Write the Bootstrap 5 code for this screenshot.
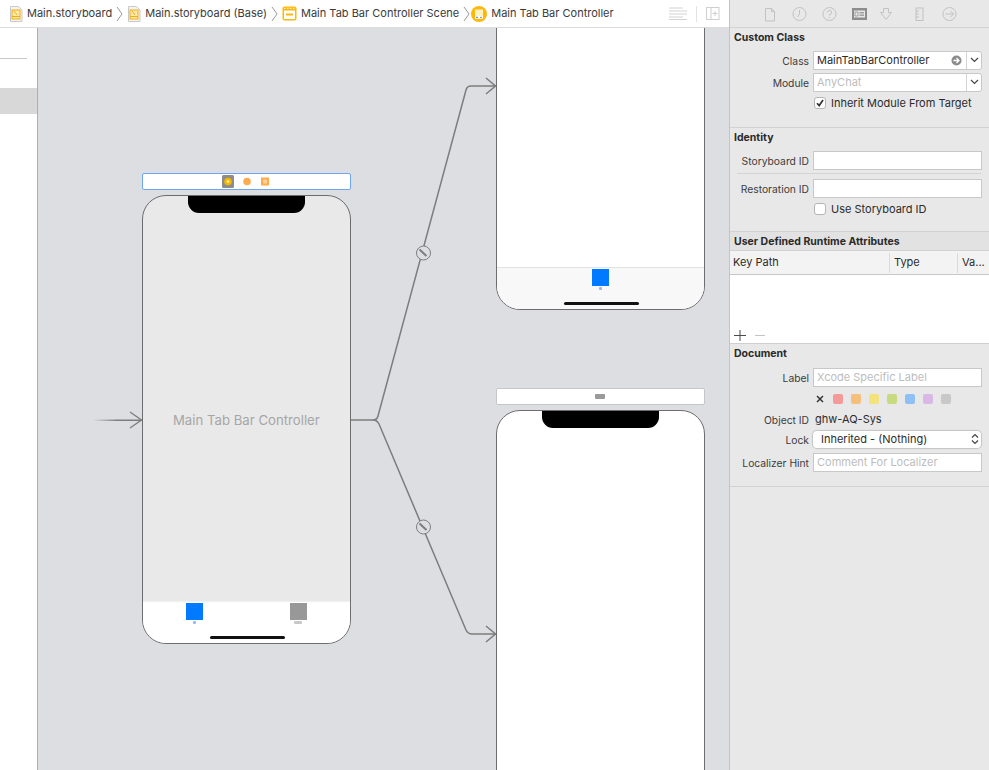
<!DOCTYPE html>
<html lang="en">
<head>
  <meta charset="UTF-8" />
  <title>Main.storyboard</title>
  <link href="https://cdn.jsdelivr.net/npm/bootstrap@5.3.0/dist/css/bootstrap.min.css" rel="stylesheet">
  <style>
    html, body { height: 770px; overflow: hidden; }
    body { font-family: "Inter", "Liberation Sans", sans-serif; font-size: 11px; color: #2b2b2b; background: #e8e8e8; }

    /* editor column */
    .editor-col { width: 730px; height: 770px; border-right: 1px solid #c4c4c4; }
    .jump-bar { height: 28px; background: #fff; border-bottom: 1px solid #dcdcdc; padding-left: 9px; font-size: 11px; color: #3a3a3a; white-space: nowrap; }
    .jump-bar svg { flex: none; }
    .jump-scene-icon { margin-right: 4px; }
    .jump-ctrl-icon { margin-right: 4px; margin-left: -3px; }
    .jump-tools { margin-left: auto; padding-right: 9px; }
    .jump-sep { width: 1px; height: 16px; background: #e2e2e2; margin: 0 9px; }

    .nav-strip { width: 38px; background: #fff; border-right: 1px solid #aeaeae; }
    .nav-rule { height: 1px; background: #c8c8c8; margin-top: 30px; margin-right: 10px; }
    .nav-sel { height: 26px; background: #d8d8d8; margin-top: 29px; }

    .canvas-area { width: 692px; height: 742px; background: #dddee2; overflow: hidden; }
    .wire-layer { position: absolute; left: 0; top: 0; }
    .phone { position: absolute; left: 0; width: 209px; background: #fff; border: 1px solid #6d6d6d; border-radius: 24px; overflow: hidden; }
    .phone-a { left: 104px; top: 167px; height: 449px; background: #e9e9e9; }
    .phone-b { left: 458px; top: -60px; height: 342px; }
    .phone-c { left: 458px; top: 382px; height: 500px; }
    .notch { width: 117px; height: 18px; margin: -1px auto 0; background: #000; border-radius: 0 0 11px 11px; }
    .phone-tabs { position: absolute; left: 0; right: 0; bottom: 0; height: 42px; background: #f8f8f8; border-top: 1px solid #e2e2e2; }
    .phone-a .phone-tabs { background: #fff; border-top: 1px solid #f0f0f0; }
    .tab-item { position: absolute; top: 1px; width: 17px; text-align: center; }
    .tab-img { width: 17px; height: 17px; display: block; }
    .tab-cap { display: block; height: 3px; margin: 1px auto 0; border-radius: 1px; }
    .home-bar { position: absolute; bottom: 4px; left: 67px; width: 75px; height: 3px; background: #111; border-radius: 2px; }
    .scene-bar { position: absolute; width: 209px; height: 17px; background: #fff; border-radius: 2px; }
    .scene-a { left: 104px; top: 145px; border: 1px solid #6ea6f4; }
    .scene-c { left: 458px; top: 360px; border: 1px solid #c6c6c8; }
    .scene-title { position: absolute; left: 135px; top: 383px; font-size: 13.2px; line-height: 18px; color: #a6a6a6; white-space: nowrap; }

    /* inspector */
    .inspector { width: 259px; height: 770px; background: #e8e8e8; }
    .insp-tabs { height: 28px; padding-left: 35px; border-bottom: 1px solid #d2d2d2; }
    .insp-section { border-bottom: 1px solid #d2d2d2; padding: 0 7px 0 4px; }
    .insp-head { font-weight: 700; font-size: 10.5px; color: #2a2a2a; line-height: 14px; }
    .insp-row { height: 18px; margin-top: 4px; }
    .insp-label { width: 79px; flex: none; text-align: right; padding: 3px 4px 0 0; color: #3c3c3c; font-size: 10.3px; white-space: nowrap; }
    .insp-input.form-control { height: 19px; min-height: 0; padding: 0 3px; font-size: 11px; line-height: 17px; border: 1px solid #c8c8c8; border-radius: 0; background: #fff; color: #2b2b2b; box-shadow: none; flex: 1; }
    .insp-input.form-control::placeholder { color: #bdbdbd; opacity: 1; }
    .combo { flex: 1; height: 19px; background: #fff; border: 1px solid #c8c8c8; border-radius: 0 3px 3px 0; }
    .combo-text { flex: 1; padding-left: 3px; white-space: nowrap; }
    .combo-caret { width: 15px; height: 17px; border-left: 1px solid #d4d4d4; }
    .lock-select { flex: 1; height: 17px; margin-right: 1px; background: #fff; border-radius: 4px; box-shadow: 0 0 1px 1px #c4c4c4; padding: 0 2px 0 8px; }
    .insp-check.form-check-input { width: 12px; height: 12px; margin: 0 5px 0 0; border: 1px solid #b4b4b4; border-radius: 3px; background-color: #fff; box-shadow: none; }
    .insp-check.form-check-input:checked { background-color: #fff; border-color: #b4b4b4; background-image: url("data:image/svg+xml,%3csvg xmlns='http://www.w3.org/2000/svg' viewBox='0 0 12 12'%3e%3cpath fill='none' stroke='%23333' stroke-width='1.7' d='M3 6.2l2.2 2.4L9 3'/%3e%3c/svg%3e"); background-size: 12px; }
    .check-line { height: 14px; margin: 5px 0 0 80px; font-size: 11px; }
    .field-rule { height: 1px; background: #d4d4d4; margin: 4px 1px 5px 3px; }
    .attr-head { height: 19px; background: #e2e2e2; padding: 1px 0 0 4px; border-bottom: 1px solid #d2d2d2; }
    .attr-cols { height: 24px; background: #f3f3f3; border-bottom: 1px solid #c8c8c8; padding-left: 3px; font-size: 11px; }
    .attr-col { height: 20px; border-left: 1px solid #dadada; padding-left: 4px; }
    .attr-body { height: 69px; background: #fff; border-bottom: 1px solid #cfcfcf; padding: 55px 0 0 4px; line-height: 0; }
    .swatch { width: 10px; height: 10px; border-radius: 2px; }
    .swatch-row { height: 12px; margin: 7px 0 0 81px; gap: 8px; }
  </style>
</head>
<body>
<div class="d-flex">

  <!-- Editor -->
  <div class="editor-col d-flex flex-column">
    <div class="jump-bar d-flex align-items-center">
      <svg class="me-1" width="14" height="16" viewBox="0 0 14 16"><path d="M1.500 .5h8l3.500 3.500v11.500h-11.500z" fill="#f3f3f3" stroke="#c9c9c9"/><rect x="3" y="4" width="8" height="9" fill="#ffe9a8" stroke="#f0ae15"/><path d="M3 10.500h8M5 5l3 4" stroke="#f0ae15"/></svg>
      <span>Main.storyboard</span>
      <svg class="mx-1" width="7" height="16" viewBox="0 0 7 16"><path d="M1 1l5 7-5 7" fill="none" stroke="#9a9a9a"/></svg>
      <svg class="me-1" width="14" height="16" viewBox="0 0 14 16"><path d="M1.500 .5h8l3.500 3.500v11.500h-11.500z" fill="#f3f3f3" stroke="#c9c9c9"/><rect x="3" y="4" width="8" height="9" fill="#ffe9a8" stroke="#f0ae15"/><path d="M3 10.500h8M5 5l3 4" stroke="#f0ae15"/></svg>
      <span>Main.storyboard (Base)</span>
      <svg class="mx-1" width="7" height="16" viewBox="0 0 7 16"><path d="M1 1l5 7-5 7" fill="none" stroke="#9a9a9a"/></svg>
      <svg class="jump-scene-icon" width="15" height="15" viewBox="0 0 15 15"><rect width="14" height="14" x=".5" y=".5" rx="2" fill="#ffb80a"/><rect x="2" y="4.500" width="11" height="8.500" fill="#fff"/><rect x="4" y="7.500" width="7" height="2" fill="#ffb80a"/><path d="M2 2.300h11" stroke="#fff" stroke-dasharray="1.500 1.500"/></svg>
      <span>Main Tab Bar Controller Scene</span>
      <svg class="mx-1" width="7" height="16" viewBox="0 0 7 16"><path d="M1 1l5 7-5 7" fill="none" stroke="#9a9a9a"/></svg>
      <svg class="jump-ctrl-icon" width="16" height="16" viewBox="0 0 16 16"><circle cx="8" cy="8" r="8" fill="#ffb80a"/><rect x="4" y="3.500" width="8" height="9" fill="#fff3c4"/><rect x="4" y="10" width="8" height="2.500" fill="#fff"/><path d="M5 11.300h2" stroke="#2f7df6"/><path d="M9 11.300h2" stroke="#8a8a8a"/></svg>
      <span>Main Tab Bar Controller</span>
      <div class="jump-tools d-flex align-items-center">
        <svg width="18" height="13" viewBox="0 0 18 13"><path d="M0 1h14M0 4h18M0 7h18M0 10h14M0 12.500h18" stroke="#d2d2d2"/></svg>
        <span class="jump-sep"></span>
        <svg width="14" height="13" viewBox="0 0 14 13"><rect x=".5" y=".5" width="12.500" height="12" fill="none" stroke="#cfcfcf"/><path d="M5 .5v12M9 4v5M6.500 6.500h5" stroke="#cfcfcf"/></svg>
      </div>
    </div>

    <div class="d-flex flex-grow-1">
      <div class="nav-strip">
        <div class="nav-rule"></div>
        <div class="nav-sel"></div>
      </div>

      <div class="canvas-area position-relative">
        <!-- segues -->
        <svg class="wire-layer" width="692" height="742" viewBox="0 0 692 742">
          <defs>
            <linearGradient id="entryFade" x1="0" x2="1" y1="0" y2="0">
              <stop offset="0" stop-color="#7d7d7d" stop-opacity="0"/>
              <stop offset=".5" stop-color="#7d7d7d"/>
            </linearGradient>
          </defs>
          <rect x="55" y="391.500" width="49" height="1.500" fill="url(#entryFade)"/>
          <path d="M92 384l11.500 8-11.500 8" fill="none" stroke="#7d7d7d" stroke-width="1.300"/>
          <g fill="none" stroke="#7d7d7d" stroke-width="1.500">
            <path d="M313 392h22q4 0 5-4L428 62q1-4 5-4h25"/>
            <path d="M335 392q4 0 6 4L428 602q2 4 6 4h24"/>
            <path d="M448 50l9.500 8-9.500 8M448 598l9.500 8-9.500 8"/>
          </g>
          <g fill="#dddee2" stroke="#7d7d7d" stroke-width="1">
            <circle cx="385.500" cy="225" r="7"/>
            <circle cx="385.500" cy="499" r="7"/>
          </g>
          <path d="M381.500 221.500l7 6.500M381.500 495.500l7 6.500" stroke="#7d7d7d" stroke-width="2"/>
        </svg>

        <!-- tab bar controller -->
        <div class="scene-bar scene-a d-flex align-items-center justify-content-center gap-2">
          <svg width="66" height="15" viewBox="0 0 66 15"><rect x="9" y="1" width="12" height="13" rx="1.500" fill="#8c8c8c"/><circle cx="15" cy="7.500" r="3.800" fill="#f7b500"/><circle cx="15" cy="7.500" r="1.500" fill="#ffe98a"/><circle cx="34" cy="7.500" r="3.800" fill="#ffab4d"/><rect x="48" y="3.500" width="8" height="8" fill="#ffab4d"/><rect x="50" y="5.500" width="4" height="4" fill="#ffcf99"/></svg>
        </div>
        <div class="phone phone-a">
          <div class="notch"></div>
          <div class="phone-tabs">
            <div class="tab-item" style="left: 43px"><span class="tab-img" style="background: #007aff"></span><span class="tab-cap" style="width: 3px; background: #8fbcf5"></span></div>
            <div class="tab-item" style="left: 147px"><span class="tab-img" style="background: #989898"></span><span class="tab-cap" style="width: 8px; background: #c8c8c8"></span></div>
            <div class="home-bar"></div>
          </div>
        </div>
        <div class="scene-title">Main Tab Bar Controller</div>

        <!-- first tab -->
        <div class="phone phone-b">
          <div class="phone-tabs">
            <div class="tab-item" style="left: 95px"><span class="tab-img" style="background: #007aff"></span><span class="tab-cap" style="width: 3px; background: #8fbcf5"></span></div>
            <div class="home-bar"></div>
          </div>
        </div>

        <!-- second tab -->
        <div class="scene-bar scene-c d-flex align-items-center justify-content-center">
          <span class="tab-cap m-0" style="width: 10px; height: 5px; background: #9a9a9a"></span>
        </div>
        <div class="phone phone-c">
          <div class="notch"></div>
        </div>
      </div>
    </div>
  </div>

  <!-- Inspector -->
  <div class="inspector d-flex flex-column">
    <div class="insp-tabs d-flex align-items-center">
      <svg width="194" height="16" viewBox="0 0 194 16" fill="none" stroke="#c2c2c2">
        <path d="M.5 2.500h6l3 3v9.500h-9zM6.500 2.500v3h3"/>
        <circle cx="34.500" cy="8" r="6.500"/><path d="M34.500 4v4l-2 3"/>
        <circle cx="64.500" cy="8" r="6.500"/><path d="M62.500 6.500q0-2 2-2t2 2-2 2v1M64.500 11v1"/>
        <rect x="87" y="2" width="15" height="12" fill="#8d8d8d" stroke="none"/>
        <rect x="89" y="4.500" width="11" height="7" fill="#e8e8e8" stroke="none"/>
        <path d="M90 6h3v4h-3zM94.500 6.500h4.500M94.500 8h4.500M94.500 9.500h4.500" stroke="#8d8d8d" stroke-width=".8"/>
        <path d="M115.500 6.500h3v-4h5v4h3l-5.500 7z"/>
        <rect x="151" y="2" width="7" height="12.500"/><path d="M151 5h3M151 8h3M151 11h3"/>
        <circle cx="184.500" cy="8" r="6.500"/><path d="M180.500 8h8M185.500 5l3 3-3 3"/>
      </svg>
    </div>

    <div class="insp-section" style="height: 100px; padding-top: 3px">
      <div class="insp-head">Custom Class</div>
      <div class="insp-row d-flex align-items-center" style="margin-top: 6px">
        <span class="insp-label">Class</span>
        <div class="combo d-flex align-items-center">
          <span class="combo-text">MainTabBarController</span>
          <svg class="me-1" width="11" height="11" viewBox="0 0 11 11"><circle cx="5.500" cy="5.500" r="5" fill="#8b8b8b"/><path d="M2.500 5.500h5M5.500 3l2.500 2.500L5.500 8" fill="none" stroke="#fff" stroke-width="1.300"/></svg>
          <span class="combo-caret d-flex align-items-center justify-content-center"><svg width="9" height="6" viewBox="0 0 9 6"><path d="M1 1l3.500 3.500L8 1" fill="none" stroke="#444" stroke-width="1.200"/></svg></span>
        </div>
      </div>
      <div class="insp-row d-flex align-items-center">
        <span class="insp-label">Module</span>
        <div class="combo d-flex align-items-center">
          <span class="combo-text" style="color: #bdbdbd">AnyChat</span>
          <span class="combo-caret d-flex align-items-center justify-content-center"><svg width="9" height="6" viewBox="0 0 9 6"><path d="M1 1l3.500 3.500L8 1" fill="none" stroke="#444" stroke-width="1.200"/></svg></span>
        </div>
      </div>
      <div class="check-line d-flex align-items-center">
        <input class="form-check-input insp-check" type="checkbox" checked>
        <span>Inherit Module From Target</span>
      </div>
    </div>

    <div class="insp-section" style="height: 104px; padding-top: 3px">
      <div class="insp-head">Identity</div>
      <div class="insp-row d-flex align-items-center" style="margin-top: 6px">
        <span class="insp-label">Storyboard ID</span>
        <input class="form-control insp-input" type="text">
      </div>
      <div class="field-rule"></div>
      <div class="insp-row d-flex align-items-center" style="margin-top: 0">
        <span class="insp-label">Restoration ID</span>
        <input class="form-control insp-input" type="text">
      </div>
      <div class="check-line d-flex align-items-center">
        <input class="form-check-input insp-check" type="checkbox">
        <span>Use Storyboard ID</span>
      </div>
    </div>

    <div class="attr-head d-flex align-items-center"><span class="insp-head">User Defined Runtime Attributes</span></div>
    <div class="attr-cols d-flex align-items-center">
      <span style="width: 156px">Key Path</span>
      <span class="attr-col d-flex align-items-center" style="width: 68px">Type</span>
      <span class="attr-col d-flex align-items-center">Va...</span>
    </div>
    <div class="attr-body">
      <svg width="36" height="11" viewBox="0 0 36 11"><path d="M0 5.500h12M6 0v11" stroke="#4a4a4a"/><path d="M21 5.500h10" stroke="#c4c4c4"/></svg>
    </div>

    <div class="insp-section" style="height: 143px; padding-top: 3px">
      <div class="insp-head">Document</div>
      <div class="insp-row d-flex align-items-center" style="margin-top: 7px">
        <span class="insp-label">Label</span>
        <input class="form-control insp-input" type="text" placeholder="Xcode Specific Label">
      </div>
      <div class="swatch-row d-flex align-items-center">
        <svg width="10" height="10" viewBox="0 0 10 10"><path d="M2 2l6 6M8 2l-6 6" stroke="#333" stroke-width="1.500"/></svg>
        <span class="swatch" style="background: #f59a98"></span>
        <span class="swatch" style="background: #f6c07c"></span>
        <span class="swatch" style="background: #f4e27c"></span>
        <span class="swatch" style="background: #c6db7d"></span>
        <span class="swatch" style="background: #8fc0f4"></span>
        <span class="swatch" style="background: #dab8e6"></span>
        <span class="swatch" style="background: #c8c8c8"></span>
      </div>
      <div class="insp-row d-flex align-items-center" style="margin-top: 5px">
        <span class="insp-label">Object ID</span>
        <span style="margin: 1px 0 0 2px">ghw-AQ-Sys</span>
      </div>
      <div class="insp-row d-flex align-items-center" style="margin-top: 2px">
        <span class="insp-label">Lock</span>
        <div class="lock-select d-flex align-items-center justify-content-between">
          <span>Inherited - (Nothing)</span>
          <svg width="8" height="12" viewBox="0 0 8 12"><path d="M1 4.500l3-3 3 3M1 7.500l3 3 3-3" fill="none" stroke="#444" stroke-width="1.200"/></svg>
        </div>
      </div>
      <div class="insp-row d-flex align-items-center" style="margin-top: 5px">
        <span class="insp-label">Localizer Hint</span>
        <input class="form-control insp-input" type="text" placeholder="Comment For Localizer">
      </div>
    </div>
  </div>
</div>

<script src="https://cdn.jsdelivr.net/npm/bootstrap@5.3.0/dist/js/bootstrap.bundle.min.js"></script>
</body>
</html>
